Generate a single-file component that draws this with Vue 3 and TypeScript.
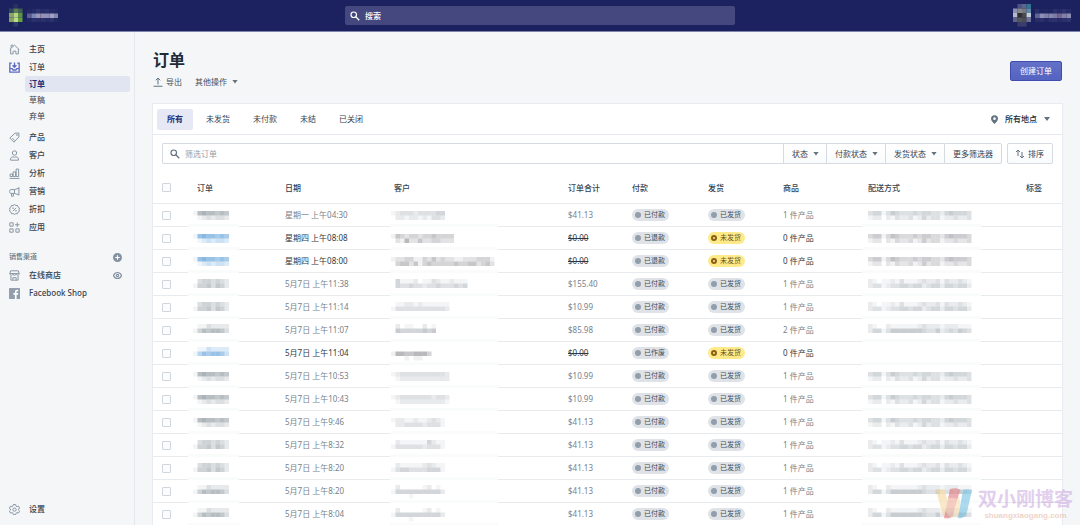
<script setup lang="ts">
import { h, type FunctionalComponent } from 'vue'

const CELL = 4.5

/* Pixelated block: every digit is the strength of one cell, a space is an empty cell. */
const Mosaic: FunctionalComponent<{ lines: string[]; tone: string; x: number; top: number; band: number[] }> = (p) => {
  const cells = p.lines.flatMap((line, r) =>
    line.split('').map((c, i) => ({ c, i, r })).filter((k) => k.c !== ' ' && k.c !== '0')
  )
  return h('svg', { width: p.band[0] + p.band[1], height: 23, 'aria-hidden': 'true' }, [
    h('rect', { x: p.band[0], y: 20, width: p.band[1], height: 4, fill: '#fafbfb' }),
    ...cells.map((k) =>
      h('rect', {
        x: p.x + k.i * CELL,
        y: p.top + k.r * CELL,
        width: CELL,
        height: CELL,
        fill: p.tone,
        'fill-opacity': Number(k.c) * 0.075
      })
    )
  ])
}
Mosaic.props = ['lines', 'tone', 'x', 'top', 'band']

/* Pixelated picture built from explicit colours. */
const Pixels: FunctionalComponent<{ grid: string[][] }> = (p) =>
  h(
    'svg',
    { width: p.grid[0].length * CELL, height: p.grid.length * CELL, 'aria-hidden': 'true' },
    p.grid.flatMap((row, r) =>
      row.map((c, i) => h('rect', { x: i * CELL, y: r * CELL, width: CELL, height: CELL, fill: c || 'none' }))
    )
  )
Pixels.props = ['grid']

const logo = [
  ['', '#24335f', ''],
  ['#30495c', '#5b7d55', '#41614c'],
  ['#8aa568', '#b9d383', '#5c9445'],
  ['#86a262', '#c1da88', '#64a03f'],
  ['', '#2a3d66', '']
]
const store = [
  ['#212762', '#252b67', '#2e346f', '#272c68', '#2a306c', '#252a66', '#212762'],
  ['#5c5d91', '#7a88b8', '#9c96b8', '#9590b4', '#8d92ba', '#a3a0c2', '#8587b0'],
  ['#212762', '#2a306c', '#282d68', '#2a306c', '#252b67', '#2d326d', '#212762']
]
const avatar = [
  ['', '#4f5383', '#5a6590', '#2f7590'],
  ['#8f91b0', '#86888c', '#77797c', '#5d8aa5'],
  ['#b4b8c8', '#2d2f33', '#4a4b4d', '#c0cdd4'],
  ['#5f6288', '#555658', '#4c4d50', '#6d7095'],
  ['', '#393c6d', '#3c3f6e', '']
]
const user = [
  ['#2b306c', '#1f2561', '#212762', '#1f2561', '#2c316c', '#262b67', '#2e336e', '#262b67'],
  ['#5e6294', '#8e8fb3', '#7f82ab', '#8486ae', '#7a7da8', '#77648f', '#7d80aa', '#8b8cb0'],
  ['#292e6a', '#2b306c', '#232864', '#2b306c', '#2d326d', '#262b67', '#2b306c', '#303570']
]

const icons: Record<string, string> = {
  home: '<path d="M3 9v9h4.500v-5h5v5H17V9M1.500 10 10 2l8.500 8M4 7V2h3v2"/>',
  orders: '<path d="M5 2H1.500v16.500h17V2H15M10 1v8M6.500 6 10 9.500 13.500 6M2 12h4l1.500 2.500h5L14 12h4"/>',
  products: '<path d="M11 2h7v7l-9 9.500L1.500 11zM6 11l4.500 4.500"/><circle cx="14.500" cy="5.500" r=".8"/>',
  customers: '<circle cx="10" cy="5.500" r="4"/><path d="M3 18.500c-1-3 1-6 4-6 1.500 0 1.500.7 3 .7s1.500-.7 3-.7c3 0 5 3 4 6z"/>',
  analytics: '<path d="M1 19h18M2 15.500V11h4.500v4.500zM7.500 15.500V7H12v8.500zM13 15.500V2h4.500v13.500z"/>',
  marketing: '<path d="M18 2v15M18 4 10 6.500H3c-2.500 0-2.500 7 0 7h7l8 2.500M10 6.500v7M4.500 14v4.500H8V14"/>',
  discounts: '<path d="m10 1 2.500 1.800 3-.2 1 2.900 2.500 1.800L18.200 10l.8 3-2.500 1.700-1 2.900-3-.2L10 19l-2.500-1.600-3 .2-1-2.900L1 13l.8-3L1 7.300l2.500-1.800 1-2.900 3 .2zM7 13l6-6"/><circle cx="7.300" cy="7.500" r=".7"/><circle cx="12.700" cy="12.500" r=".7"/>',
  apps: '<path d="M1.500 1.500h6v6h-6zM1.500 12.500h6v6h-6zM12.500 12.500h6v6h-6zM15 1v8M11 5h8"/>',
  store: '<path d="M3 1.500h14l1.500 5H1.500zM1.500 6.500c0 4 5 4 5.500.5.500 3.500 5.500 3.500 6 0 .5 3.500 5.500 3.500 5.500-.5M3.500 10.500v8h13v-8M7 18v-4h6v4"/>',
  settings: '<path d="m8 1-.7 2.600-2 1.100-2.600-.7-2 3.400L2.600 9.300v1.900L.7 13l2 3.400 2.600-.7 2 1.100L8 19.300h4l.7-2.500 2-1.100 2.600.7 2-3.400-1.900-1.800V9.300l1.900-1.900-2-3.400-2.600.7-2-1.100L12 1z"/><circle cx="10" cy="10.200" r="3"/>'
}

interface NavItem { label: string; icon: string; active?: boolean; children?: string[] }
const nav: NavItem[] = [
  { label: '主页', icon: 'home' },
  { label: '订单', icon: 'orders', active: true, children: ['订单', '草稿', '弃单'] },
  { label: '产品', icon: 'products' },
  { label: '客户', icon: 'customers' },
  { label: '分析', icon: 'analytics' },
  { label: '营销', icon: 'marketing' },
  { label: '折扣', icon: 'discounts' },
  { label: '应用', icon: 'apps' }
]

const tabs = ['所有', '未发货', '未付款', '未结', '已关闭']
const filters = ['状态', '付款状态', '发货状态']
const columns = ['订单', '日期', '客户', '订单合计', '付款', '发货', '商品', '配送方式', '标签']

/* Vertical phase of the pixelated text in a row */
type Phase = 'a' | 'b' | 'c'
const phaseTop: Record<Phase, number> = { a: 7, b: 6, c: 5 }
const orderLines: Record<Phase, string[]> = {
  a: ['16766565', ' 1232332'],
  b: [' 3443432', '14453542'],
  c: [' 1132222', '14656653']
}
const methodLines: Record<Phase, string[]> = {
  a: ['34413543334344332454443', '12202132231242331223223'],
  b: ['21011213111232231322321', '23312334434423442443442'],
  c: ['21002111111232221222111', '24413555555543352343543']
}

interface Order {
  date: string; total: string; pay: string; items: number; phase: Phase; who: string[]; open?: boolean; method?: boolean
}
const orders: Order[] = [
  { date: '星期一 上午04:30', total: '$41.13', pay: '已付款', items: 1, phase: 'a', who: ['123332333344', ' 22122121332'], method: true },
  { date: '星期四 上午08:08', total: '$0.00', pay: '已退款', items: 0, phase: 'a', who: ['14323323343333', ' 2152242233222'], open: true, method: true },
  { date: '星期四 上午08:00', total: '$0.00', pay: '已退款', items: 0, phase: 'a', who: ['12233113242322112223331', ' 3442413433333433442342'], open: true, method: true },
  { date: '5月7日 上午11:38', total: '$155.40', pay: '已付款', items: 1, phase: 'b', who: [' 41112 1132112111', ' 4334332334333434'], method: true },
  { date: '5月7日 上午11:14', total: '$10.99', pay: '已付款', items: 1, phase: 'b', who: [' 112212111111', '1333333333332'], method: true },
  { date: '5月7日 上午11:07', total: '$85.98', pay: '已付款', items: 2, phase: 'c', who: [' 2 11  2 1', ' 544444545'], method: true },
  { date: '5月7日 上午11:04', total: '$0.00', pay: '已作废', items: 0, phase: 'c', who: ['', '155445553', '   1 11'], open: true },
  { date: '5月7日 上午10:53', total: '$10.99', pay: '已付款', items: 1, phase: 'a', who: ['1233333333332', ' 122222222222'], method: true },
  { date: '5月7日 上午10:43', total: '$10.99', pay: '已付款', items: 1, phase: 'a', who: ['1233333332332', ' 122222222221'], method: true },
  { date: '5月7日 上午9:46', total: '$41.13', pay: '已付款', items: 1, phase: 'a', who: ['122112112321', ' 22333323331'], method: true },
  { date: '5月7日 上午8:32', total: '$41.13', pay: '已付款', items: 1, phase: 'b', who: [' 21111114211', '133333323331'], method: true },
  { date: '5月7日 上午8:20', total: '$41.13', pay: '已付款', items: 1, phase: 'b', who: [' 21111123211', '134433334441'], method: true },
  { date: '5月7日 上午8:20', total: '$41.13', pay: '已付款', items: 1, phase: 'c', who: [' 2     12 1', '144444444442', '    1'], method: true },
  { date: '5月7日 上午8:04', total: '$41.13', pay: '已付款', items: 1, phase: 'c', who: [' 2     12 1', '144444444442', '    1'], method: true }
]
</script>

<template>
  <div class="shell">
    <header class="topbar">
      <div class="brand"><Pixels :grid="logo" /><Pixels :grid="store" /></div>
      <label class="global-search">
        <svg class="icon-search" viewBox="0 0 20 20"><circle cx="7.500" cy="7.500" r="5.500" /><path d="m12 12 6.500 6.500" /></svg>
        <input type="search" placeholder="搜索" aria-label="搜索" />
      </label>
      <div class="account"><Pixels :grid="avatar" /><Pixels :grid="user" /></div>
    </header>

    <div class="body">
      <nav class="sidebar">
        <ul>
          <li v-for="item in nav" :key="item.label">
            <a class="nav-link" :class="{ active: item.active }" href="#">
              <svg class="nav-icon" viewBox="0 0 20 20" v-html="icons[item.icon]" />{{ item.label }}
            </a>
            <ul v-if="item.children" class="subnav">
              <li v-for="(child, i) in item.children" :key="child">
                <a class="sub-link" :class="{ selected: i === 0 }" href="#">{{ child }}</a>
              </li>
            </ul>
          </li>
        </ul>
        <div class="channel-head">
          <span>销售渠道</span>
          <button class="bare" type="button" aria-label="+">
            <svg class="round" viewBox="0 0 20 20"><circle cx="10" cy="10" r="10" fill="#8492a0" /><path d="M10 5v10M5 10h10" stroke="#fff" stroke-width="2.500" /></svg>
          </button>
        </div>
        <div class="channel">
          <a class="nav-link" href="#"><svg class="nav-icon" viewBox="0 0 20 20" v-html="icons.store" />在线商店</a>
          <svg class="eye" viewBox="0 0 20 20"><path d="M1 10c4-9 14-9 18 0-4 9-14 9-18 0z" /><circle cx="10" cy="10" r="2.500" /></svg>
        </div>
        <a class="nav-link" href="#">
          <svg class="nav-fb" viewBox="0 0 20 20"><rect width="20" height="20" rx="1" fill="#919eab" /><path d="M13.800 20v-7.700h2.600l.4-3h-3V7.400c0-.9.3-1.500 1.500-1.500h1.600V3.200c-.3 0-1.200-.1-2.300-.1-2.300 0-3.900 1.400-3.900 4v2.200H8v3h2.700V20z" fill="#fff" /></svg>
          Facebook Shop
        </a>
        <a class="nav-link settings" href="#"><svg class="nav-icon" viewBox="0 0 20 20" v-html="icons.settings" />设置</a>
      </nav>

      <main>
        <div class="page-head">
          <div class="heading">
            <h1>订单</h1>
            <div class="actions">
              <button class="bare" type="button">
                <svg class="export" viewBox="0 0 20 20"><path d="M10 15V2M5.500 6.500 10 2l4.500 4.500M1 18.500h18" /></svg>导出
              </button>
              <button class="bare" type="button">其他操作<i class="caret" /></button>
            </div>
          </div>
          <button class="primary" type="button">创建订单</button>
        </div>

        <section class="card">
          <div class="tabbar">
            <button v-for="(t, i) in tabs" :key="t" class="tab" :class="{ current: i === 0 }" type="button">{{ t }}</button>
            <button class="bare location" type="button">
              <svg class="pin" viewBox="0 0 16 20"><path fill-rule="evenodd" d="M8 0a8 8 0 0 0-8 8c0 5 5.500 10 8 12 2.500-2 8-7 8-12a8 8 0 0 0-8-8zm0 5a3 3 0 1 1 0 6 3 3 0 0 1 0-6z" /></svg>
              所有地点<i class="caret" />
            </button>
          </div>

          <div class="filters">
            <label class="filter-box">
              <svg class="icon-search" viewBox="0 0 20 20"><circle cx="7.500" cy="7.500" r="5.500" /><path d="m12 12 6.500 6.500" /></svg>
              <input type="search" placeholder="筛选订单" aria-label="筛选订单" />
            </label>
            <button v-for="f in filters" :key="f" class="filter" type="button">{{ f }}<i class="caret" /></button>
            <button class="filter last" type="button">更多筛选器</button>
            <button class="filter sort" type="button">
              <svg class="sort-icon" viewBox="0 0 20 20"><path d="M6 14V2M2 6l4-4 4 4M14 6v12M10 14l4 4 4-4" /></svg>排序
            </button>
          </div>

          <table>
            <colgroup>
              <col class="c-check" /><col class="c-order" /><col class="c-date" /><col /><col class="c-total" />
              <col class="c-pay" /><col class="c-ship" /><col class="c-items" /><col class="c-method" /><col class="c-tag" />
            </colgroup>
            <thead>
              <tr>
                <th><input type="checkbox" aria-label="所有" /></th>
                <th v-for="c in columns" :key="c" scope="col">{{ c }}</th>
              </tr>
            </thead>
            <tbody>
              <tr v-for="(o, i) in orders" :key="i" :class="{ open: o.open }">
                <td><input type="checkbox" :aria-label="o.date" /></td>
                <td class="masked"><Mosaic :lines="orderLines[o.phase]" :tone="o.open ? '#1a78c8' : '#5d6e78'" :x="5" :top="phaseTop[o.phase]" :band="[0, 51]" /></td>
                <td>{{ o.date }}</td>
                <td class="masked"><Mosaic :lines="o.who" :tone="o.open ? '#44444e' : '#6a7580'" :x="6" :top="phaseTop[o.phase]" :band="[5, 108]" /></td>
                <td class="total">{{ o.total }}</td>
                <td><span class="badge">{{ o.pay }}</span></td>
                <td><span class="badge" :class="{ warn: o.open }">{{ o.open ? '未发货' : '已发货' }}</span></td>
                <td>{{ o.items }} 件产品</td>
                <td class="masked"><Mosaic :lines="o.method ? methodLines[o.phase] : []" :tone="o.open ? '#5a5a68' : '#6a7a84'" :x="9" :top="phaseTop[o.phase]" :band="[3, 119]" /></td>
                <td></td>
              </tr>
            </tbody>
          </table>
        </section>
      </main>
    </div>

    <div class="watermark">
      <svg class="mark" viewBox="0 0 36 32">
        <path d="M0 2c3-1 6-1 9 0l6 28c-5 1-8-1-9-6z" fill="#f6d79a" />
        <path d="M14 1c4-1 8-1 10 1l-7 26c-1 2-7 3-9 2z" fill="#e0797f" />
        <path d="M4 15c8-7 16-6 20-2l-4 15c-2 2-5 2-7 0z" fill="#f9dfb0" fill-opacity=".5" />
        <path d="M23 8l3 20-5 2-3-8z" fill="#f9dfb0" />
        <path d="M27 2c3-1 6-1 9 0l-5 22c-1 5-5 7-9 6z" fill="#74c0e2" />
      </svg>
      <div class="mark-text"><strong>双小刚博客</strong><small>shuangxiaogang.com</small></div>
    </div>
  </div>
</template>

<style>
body {
  background: #f4f6f8;
}
</style>

<style scoped>
.shell {
  position: relative;
  display: flex;
  flex-direction: column;
  height: 100vh;
  overflow: hidden;
  color: #212b36;
  background: #f4f6f8;
  font: 8px/12px "Noto Sans", "Noto Sans CJK SC", sans-serif;
}
*,
*::before {
  box-sizing: border-box;
}
button,
input {
  font: inherit;
  color: inherit;
  margin: 0;
}
button {
  display: flex;
  align-items: center;
  white-space: nowrap;
}
ul {
  list-style: none;
  margin: 0;
  padding: 0;
}
svg {
  flex: none;
  display: block;
}
.topbar {
  flex: none;
  display: grid;
  grid-template-columns: 1fr minmax(0, 390px) 1fr;
  align-items: center;
  height: 32px;
  padding: 0 9px;
  background: #1c2260;
  border-bottom: 1px solid #7f84ab;
}
.brand,
.account {
  display: flex;
  align-items: center;
  gap: 4px;
}
.account {
  justify-content: flex-end;
}
.global-search {
  display: flex;
  align-items: center;
  gap: 5px;
  height: 19px;
  padding: 0 5px;
  border-radius: 2px;
  background: #45477f;
  color: #fff;
}
.icon-search {
  width: 10px;
  height: 10px;
  fill: none;
  stroke: currentColor;
  stroke-width: 2.4;
}
input[type="search"] {
  flex: 1;
  min-width: 0;
  padding: 0;
  border: 0;
  outline: 0;
  background: none;
  appearance: none;
}
.global-search input::placeholder {
  color: #fff;
  font-weight: 500;
}
.body {
  flex: 1;
  min-height: 0;
  display: flex;
}
.sidebar {
  flex: none;
  display: flex;
  flex-direction: column;
  width: 135px;
  padding: 8px 4px 7px 0;
  border-right: 1px solid #e4e8ed;
}
.nav-link {
  display: flex;
  align-items: center;
  gap: 9px;
  height: 18px;
  padding-left: 9px;
  color: #37424d;
  font-weight: 600;
  text-decoration: none;
}
.nav-icon {
  width: 11px;
  height: 11px;
  fill: none;
  stroke: #8896a4;
  stroke-width: 1.8;
}
.active .nav-icon {
  stroke: #5c6ac4;
  stroke-width: 2.4;
}
.nav-fb {
  width: 11px;
  height: 11px;
}
.subnav {
  padding: 0 0 4px 25px;
}
.sub-link {
  display: flex;
  align-items: center;
  height: 16px;
  padding-left: 4px;
  border-radius: 2px;
  color: #37424d;
  text-decoration: none;
}
.sub-link.selected {
  background: #e1e5f1;
  color: #202e78;
  font-weight: 700;
}
.nav-link:not([class*="fb"]) {
  font-weight: 500;
}
.channel-head {
  display: flex;
  align-items: center;
  justify-content: space-between;
  height: 18px;
  margin-top: 12px;
  padding: 0 8px 0 9px;
  color: #637381;
  font-size: 7px;
  font-weight: 500;
}
.round,
.eye {
  width: 9px;
  height: 9px;
}
.channel {
  display: flex;
  align-items: center;
  justify-content: space-between;
  padding-right: 8px;
}
.eye {
  fill: none;
  stroke: #8492a0;
  stroke-width: 2.6;
}
.settings {
  margin-top: auto;
}
main {
  flex: 1;
  min-width: 0;
  padding: 0 18px;
}
.page-head {
  display: flex;
  align-items: center;
  justify-content: space-between;
  height: 72px;
  padding-top: 6px;
}
.heading {
  padding-bottom: 6px;
}
h1 {
  margin: 0;
  font-size: 16px;
  line-height: 22px;
  font-weight: 700;
}
.bare {
  padding: 0;
  border: 0;
  background: none;
}
.actions {
  display: flex;
  gap: 13px;
  margin-top: 5px;
  color: #454f5b;
}
.export {
  width: 10px;
  height: 10px;
  margin-right: 3px;
  fill: none;
  stroke: #637381;
  stroke-width: 2;
}
.caret {
  width: 6px;
  height: 4px;
  margin-left: 5px;
  background: #637381;
  clip-path: polygon(0 0, 100% 0, 50% 100%);
}
.primary {
  height: 20px;
  padding: 0 9px;
  border: 1px solid #3f4eae;
  border-radius: 2px;
  background: linear-gradient(#6371c7, #5563c1);
  color: #fff;
}
.card {
  background: #fff;
  box-shadow: 0 0 0 1px #e8ebef;
}
.tabbar {
  display: flex;
  align-items: center;
  gap: 3px;
  height: 31px;
  padding: 0 12px 0 4px;
  border-bottom: 1px solid #e6eaee;
}
.tab {
  height: 21px;
  padding: 0 10px;
  border: 0;
  border-radius: 2px;
  background: none;
  color: #37424d;
}
.tab.current {
  background: #e6e8f5;
  color: #202e78;
  font-weight: 700;
}
.location {
  margin-left: auto;
  font-weight: 500;
}
.location .caret {
  margin-left: 7px;
}
.pin {
  width: 7px;
  height: 9px;
  margin-right: 7px;
  fill: #637381;
}
.filters {
  display: flex;
  padding: 8px 9px 0;
}
.filter-box {
  flex: 1;
  min-width: 0;
  display: flex;
  align-items: center;
  gap: 5px;
  height: 21px;
  padding: 0 7px;
  border: 1px solid #d5dbe1;
  border-right: 0;
  border-radius: 2px 0 0 2px;
  color: #637381;
}
.filter-box input::placeholder {
  color: #919eab;
}
.filter {
  height: 21px;
  padding: 0 7px 0 8px;
  border: 1px solid #d5dbe1;
  border-right: 0;
  background: linear-gradient(#fff, #fafbfc);
  color: #37424d;
}
.filter.last {
  padding: 0 8px;
  border-right: 1px solid #d5dbe1;
  border-radius: 0 2px 2px 0;
}
.filter.sort {
  gap: 3px;
  margin-left: 5px;
  padding: 0 8px 0 7px;
  border-right: 1px solid #d5dbe1;
  border-radius: 2px;
}
.sort-icon {
  width: 10px;
  height: 10px;
  fill: none;
  stroke: #637381;
  stroke-width: 2;
}
table {
  width: 100%;
  margin-top: 8px;
  border-collapse: separate;
  border-spacing: 0;
  table-layout: fixed;
}
.c-check { width: 35px; }
.c-order { width: 88px; }
.c-date { width: 109px; }
.c-total { width: 64px; }
.c-pay { width: 76px; }
.c-ship { width: 75px; }
.c-items { width: 85px; }
.c-method { width: 158px; }
.c-tag { width: 45px; }
th,
td {
  height: 23px;
  padding: 0 0 0 9px;
  border-bottom: 1px solid #e8ebee;
  text-align: left;
  vertical-align: middle;
  white-space: nowrap;
}
th {
  height: 32px;
  color: #37424d;
  font-weight: 500;
}
td {
  color: #77828c;
}
.open td {
  color: #2f3943;
}
.open .total {
  text-decoration: line-through;
}
td.masked {
  padding: 0;
  border-bottom: 0;
  background: linear-gradient(#e8ebee, #e8ebee) bottom / 100% 1px no-repeat;
}
input[type="checkbox"] {
  display: block;
  width: 9px;
  height: 9px;
  appearance: none;
  border: 1px solid #cfd6dd;
  border-radius: 1px;
  background: #fcfcfd;
}
.badge {
  display: inline-flex;
  align-items: center;
  gap: 3px;
  height: 12px;
  padding: 0 4px 0 3px;
  border-radius: 6px;
  background: #dfe3e8;
  color: #414c57;
  font-size: 7px;
  vertical-align: middle;
}
.badge::before {
  content: "";
  width: 6px;
  height: 6px;
  border-radius: 50%;
  background: #919eab;
}
.badge.warn {
  background: #ffea8a;
  color: #6a5218;
}
.badge.warn::before {
  border: 2px solid #8a6116;
  background: none;
}
.watermark {
  position: absolute;
  right: 7px;
  bottom: 4px;
  display: flex;
  align-items: center;
  gap: 6px;
  opacity: 0.6;
  pointer-events: none;
}
.mark {
  width: 36px;
  height: 32px;
}
.mark-text {
  display: flex;
  flex-direction: column;
  align-items: center;
}
.mark-text strong {
  color: #cfaee2;
  font-size: 19px;
  line-height: 24px;
}
.mark-text small {
  color: #e5b9a4;
  font: 700 8px/10px "Liberation Sans", sans-serif;
}
</style>
